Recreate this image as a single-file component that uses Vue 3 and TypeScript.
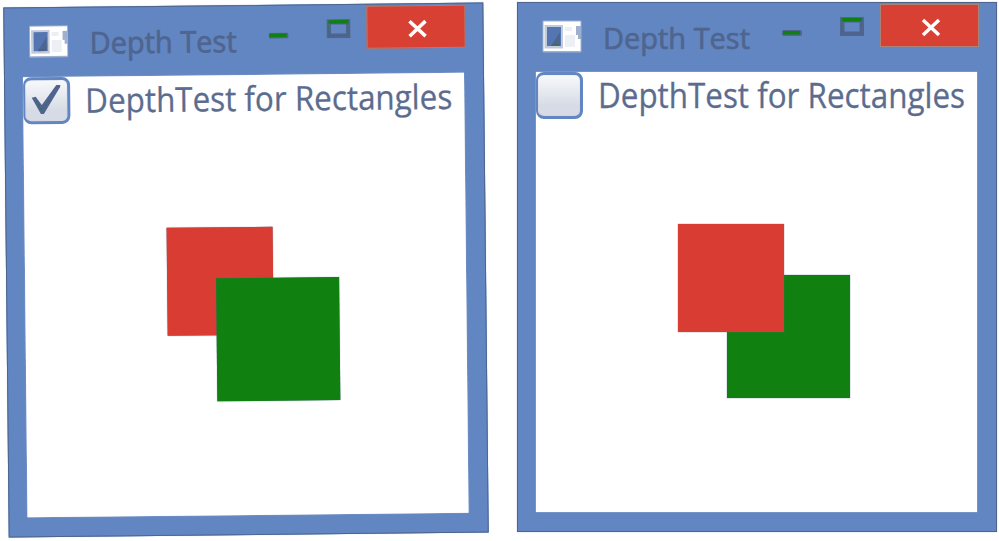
<script setup lang="ts">
import { ref } from 'vue'

interface DemoWindow {
  id: string
  tilted: boolean
  depthTest: boolean
}

const windows = ref<DemoWindow[]>([
  { id: 'with-depth', tilted: true, depthTest: true },
  { id: 'without-depth', tilted: false, depthTest: false },
])
</script>

<template>
  <main class="stage">
    <section v-for="win in windows" :key="win.id" class="window" :class="{ tilted: win.tilted }">
      <header class="titlebar">
        <svg class="app-icon" width="40" height="33" viewBox="0 0 40 33">
          <rect x="0.5" y="0.5" width="39" height="32" rx="1" fill="#9fb0cf" />
          <rect x="1.5" y="1.5" width="37" height="29.5" fill="#fff" />
          <rect x="2.5" y="5" width="18.5" height="23.5" fill="#c3cbda" />
          <rect x="5" y="7" width="14" height="19" fill="#5375b2" />
          <path d="M18 12V26H9Z" fill="#4f658f" />
          <path d="M10 24.5H17" stroke="#2c7050" stroke-dasharray="2 1" />
          <rect x="23" y="7" width="7" height="4" fill="#eceff4" />
          <rect x="23" y="15" width="10" height="12" fill="#eceff4" />
          <path d="M34 6H39V19H36V15H34Z" fill="#9fb0cf" />
        </svg>
        <svg class="title" width="150" height="42" viewBox="0 0 150 42">
          <text x="0" y="30" textLength="147" lengthAdjust="spacingAndGlyphs">Depth Test</text>
        </svg>
        <svg class="minimize" width="20" height="6" viewBox="0 0 20 6">
          <rect width="20" height="6" rx="2" fill="#4f658f" />
          <rect x="1" y="1" width="17" height="3.5" fill="#108010" />
        </svg>
        <svg class="maximize" width="24" height="19" viewBox="0 0 24 19">
          <path d="M0 0H24V19H0ZM4.5 5.5V14.5H19.5V5.5Z" fill="#4f658f" fill-rule="evenodd" />
          <rect x="2" y="1" width="20" height="3.5" fill="#108010" />
          <path d="M2 4V16.5H21.5V4" fill="none" stroke="#35705a" stroke-dasharray="1 1.5" />
        </svg>
        <div class="close">
          <svg width="20" height="19" viewBox="0 0 20 19">
            <path d="M2 2L18 17M18 2L2 17" stroke="#fff" stroke-width="3.5" />
          </svg>
        </div>
      </header>
      <div class="client">
        <div class="option">
          <span class="checkbox">
            <svg v-if="win.depthTest" width="30" height="32" viewBox="0 0 30 32">
              <path d="M0.5 12.5L4.5 11.5L10.5 20L26 -1L29.5 -1.5L29 2L12.5 29H9.5Z" fill="#4f658f" />
              <path d="M5 16L10.5 25L18 15" fill="none" stroke="#2c7050" stroke-dasharray="2 2" />
            </svg>
          </span>
          <svg class="label" width="372" height="48" viewBox="0 0 372 48">
            <text x="0" y="36" textLength="367" lengthAdjust="spacingAndGlyphs">DepthTest for Rectangles</text>
          </svg>
        </div>
        <div class="scene" :class="{ 'depth-on': win.depthTest }">
          <div class="shape red"></div>
          <div class="shape green"></div>
        </div>
      </div>
    </section>
  </main>
</template>

<style>
body {
  margin: 0;
  background: #fff;
}
</style>

<style scoped>
.stage {
  box-sizing: border-box;
  display: flex;
  gap: 31px;
  width: 999px;
  height: 541px;
  padding: 2px 0 0 6px;
  overflow: hidden;
  background: #fff;
}

.window {
  box-sizing: border-box;
  flex: none;
  width: 480px;
  height: 530px;
  padding: 0 18px 0 18px;
  border: 1px solid #4f658f;
  background: #6286c1;
  box-shadow: 0 0 1px #9fb0cf;
}

.window.tilted {
  margin-top: 3px;
  transform: rotate(-0.59deg);
}

.titlebar {
  display: flex;
  align-items: flex-start;
  height: 69px;
}

.app-icon {
  flex: none;
  margin: 16.5px 0 0 6px;
}

.title {
  flex: none;
  margin: 15.5px 0 0 20.5px;
  overflow: visible;
}

.title text {
  font-family: "Open Sans", "Noto Sans", sans-serif;
  font-size: 30px;
  fill: #4f658f;
  stroke: #4f658f;
  stroke-width: 0.7px;
}

.minimize {
  flex: none;
  margin: 27px 0 0 29.5px;
}

.maximize {
  flex: none;
  margin: 14px 0 0 38px;
}

.close {
  display: flex;
  flex: none;
  justify-content: center;
  width: 99px;
  height: 43px;
  margin: 1px 0 0 16px;
  padding-top: 14px;
  padding-left: 3px;
  box-sizing: border-box;
  background: #d94034;
  outline: 1px solid #aa8278;
  outline-offset: -1px;
}

.client {
  width: 441px;
  height: 440px;
  background: #fff;
  box-shadow: 0 0 1px #d6dbe5;
}

.option {
  display: flex;
  align-items: flex-start;
  height: 48px;
}

.checkbox {
  box-sizing: border-box;
  display: flex;
  flex: none;
  align-items: center;
  justify-content: center;
  width: 47px;
  height: 47px;
  border: 3px solid #6286c1;
  border-left-width: 2px;
  border-radius: 8px;
  background: linear-gradient(#f8f9fb, #d6dbe5 75%);
  box-shadow: inset 0 0 1px #9fb0cf;
}

.label {
  flex: none;
  margin-left: 15px;
  overflow: visible;
}

.label text {
  font-family: "Open Sans", "Noto Sans", sans-serif;
  font-size: 34px;
  fill: #5b6c8e;
  stroke: #5b6c8e;
  stroke-width: 0.3px;
}

.scene {
  display: grid;
  grid-template-columns: 49px 57.5px 66px;
  grid-template-rows: 51.5px 56.5px 66px;
  margin: 103.5px 0 0 141.5px;
}

.shape.red {
  z-index: 2;
  grid-area: 1 / 1 / 3 / 3;
  background: #d93c33;
  box-shadow: 0 0 1px #6d6674;
}

.shape.green {
  z-index: 1;
  grid-area: 2 / 2 / 4 / 4;
  background: #108010;
  box-shadow: 0 0 1px #4f658f;
}

.depth-on .shape.green {
  z-index: 3;
}
</style>
